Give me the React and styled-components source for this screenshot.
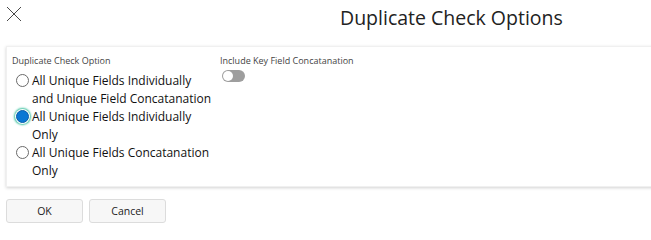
import React from 'react';
import styled, { createGlobalStyle } from 'styled-components';

const GlobalStyle = createGlobalStyle`
  html, body {
    margin: 0;
    padding: 0;
    background: #ffffff;
    overflow: hidden;
  }
  body {
    font-family: 'Open Sans', 'Noto Sans', sans-serif;
    color: #222;
  }
  * {
    box-sizing: border-box;
  }
`;

const Dialog = styled.div`
  width: 660px;
  height: 233px;
  display: flex;
  flex-direction: column;
`;

const Header = styled.div`
  height: 46px;
  display: flex;
  align-items: flex-start;
`;

const CloseButton = styled.button`
  border: none;
  background: none;
  padding: 0;
  margin: 6px 0 0 6px;
  width: 16px;
  height: 16px;
  cursor: pointer;
`;

const Title = styled.h1`
  margin: 4px 0 0 318px;
  font-weight: 400;
  font-size: 19.5px;
  color: #222;
`;

const Panel = styled.div`
  margin-left: 6px;
  height: 141px;
  border: 1px solid #f0f0f0;
  box-shadow: 0 1px 3px rgba(0, 0, 0, 0.18);
  display: grid;
  grid-template-columns: 208px 1fr;
  padding: 7px 0 0 5px;
`;

const Column = styled.div`
  display: flex;
  flex-direction: column;
`;

const FieldLabel = styled.div`
  font-size: 9px;
  color: #444;
  height: 14px;
  line-height: 14px;
  margin-bottom: 4px;
`;

const RadioRow = styled.label`
  display: flex;
  align-items: flex-start;
  font-size: 12px;
  line-height: 17.5px;
  color: #111;
  margin-bottom: 1px;
  cursor: pointer;
`;

const RadioText = styled.span`
  max-width: 180px;
`;

const RadioCircle = styled.span`
  flex: none;
  width: 13px;
  height: 13px;
  margin: 2px 3px 0 4px;
  border-radius: 50%;
  border: 1px solid ${p => (p.checked ? '#0a5ea8' : '#6a6a6a')};
  background: ${p => (p.checked ? '#0a78d4' : '#fff')};
  box-shadow: ${p => (p.checked ? '0 0 0 1px #fff, 0 0 2px 2px #3fc1a0' : 'none')};
`;

const Toggle = styled.span`
  display: block;
  width: 23px;
  height: 12px;
  margin: -2px 0 0 2px;
  border-radius: 6px;
  background: #9e9e9e;
  position: relative;
  &::after {
    content: '';
    position: absolute;
    left: 1px;
    top: 1px;
    width: 10px;
    height: 10px;
    border-radius: 50%;
    background: #fff;
  }
`;

const Footer = styled.div`
  display: flex;
  gap: 6px;
  padding: 12px 0 0 6px;
`;

const Button = styled.button`
  width: 77px;
  height: 24px;
  border: 1px solid #dcdcdc;
  border-radius: 3px;
  background: #f7f7f7;
  font-family: 'Open Sans', 'Noto Sans', sans-serif;
  font-size: 10.5px;
  color: #222;
  padding: 0;
`;

const options = [
  { text: 'All Unique Fields Individually and Unique Field Concatanation', checked: false },
  { text: 'All Unique Fields Individually Only', checked: true },
  { text: 'All Unique Fields Concatanation Only', checked: false },
];

const App = () => (
  <>
    <GlobalStyle />
    <Dialog>
      <Header>
        <CloseButton aria-label="Close">
          <svg width="16" height="16" viewBox="0 0 16 16">
            <path d="M1 1 L15 15 M15 1 L1 15" stroke="#333" strokeWidth="0.9" fill="none" />
          </svg>
        </CloseButton>
        <Title>Duplicate Check Options</Title>
      </Header>
      <Panel>
        <Column>
          <FieldLabel>Duplicate Check Option</FieldLabel>
          {options.map(o => (
            <RadioRow key={o.text}>
              <RadioCircle checked={o.checked} />
              <RadioText>{o.text}</RadioText>
            </RadioRow>
          ))}
        </Column>
        <Column>
          <FieldLabel>Include Key Field Concatanation</FieldLabel>
          <Toggle />
        </Column>
      </Panel>
      <Footer>
        <Button>OK</Button>
        <Button>Cancel</Button>
      </Footer>
    </Dialog>
  </>
);

export default App;
